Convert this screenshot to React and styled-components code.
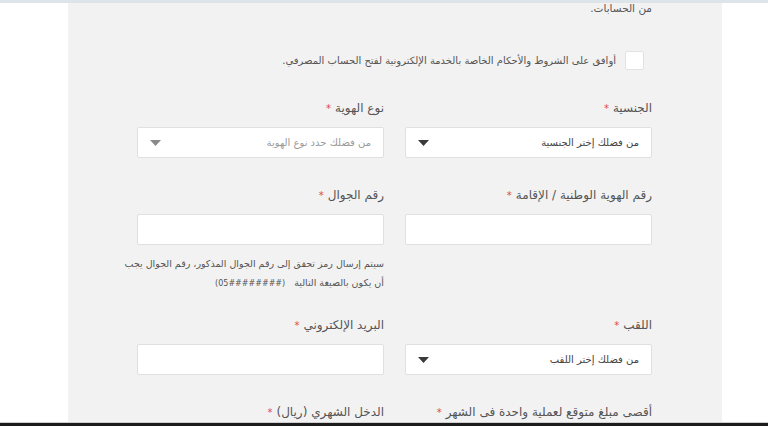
import styled, { createGlobalStyle } from 'styled-components'

const GlobalStyle = createGlobalStyle`
  html, body {
    margin: 0;
    padding: 0;
    background: #ffffff;
  }
  body {
    font-family: "DejaVu Sans", "Noto Sans", sans-serif;
    color: #555;
  }
`

const Screen = styled.div`
  width: 768px;
  height: 426px;
  display: flex;
  flex-direction: column;
  overflow: hidden;
  background: #fff;
`

const TopLine = styled.div`
  height: 3px;
  flex-shrink: 0;
  background: #dde5ea;
`

const Stage = styled.div`
  flex: 1;
  min-height: 0;
  display: flex;
  padding: 0 46px 0 68px;
  overflow: hidden;
`

const Panel = styled.form`
  flex: 1;
  background: #f2f2f2;
  padding: 0 70px 0 69px;
  display: flex;
  flex-direction: column;
  direction: rtl;
  overflow: hidden;
`

const Intro = styled.p`
  margin: -4px 0 0;
  font-size: 10.5px;
  line-height: 18px;
  color: #555;
`

const AgreeRow = styled.label`
  display: flex;
  align-items: center;
  gap: 9px;
  margin-top: 34px;
  margin-right: 8px;
  font-size: 10px;
  color: #555;
`

const Check = styled.span`
  width: 17px;
  height: 17px;
  flex-shrink: 0;
  background: #fff;
  border: 1px solid #e2e2e2;
  border-radius: 2px;
`

const Grid = styled.div`
  display: grid;
  grid-template-columns: 247px 247px;
  column-gap: 21px;
  row-gap: 27px;
  margin-top: 28px;
`

const Field = styled.div`
  display: flex;
  flex-direction: column;
`

const Label = styled.div`
  font-size: 12px;
  line-height: 20px;
  color: #555;
  margin-bottom: 8px;
  white-space: nowrap;

  b {
    color: #e0474c;
    font-weight: normal;
    font-size: 10px;
    margin-right: 4px;
  }
`

const Input = styled.div`
  height: 29px;
  background: #fff;
  border: 1px solid #e0e0e0;
  border-radius: 2px;
`

const Select = styled.div`
  height: 29px;
  background: #fff;
  border: 1px solid #e0e0e0;
  border-radius: 2px;
  display: flex;
  align-items: center;
  justify-content: space-between;
  padding: 0 12px 0 12px;
  font-size: 10px;
  color: ${p => (p.$disabled ? '#9a9a9a' : '#444')};
`

const Help = styled.div`
  margin-top: 9px;
  margin-bottom: -5px;
  font-size: 9.5px;
  line-height: 19px;
  color: #555;
  white-space: nowrap;
`

const Format = styled.span`
  display: inline-block;
  direction: ltr;
  unicode-bidi: isolate;
  font-size: 8px;
  margin-right: 6px;
`

const Caret = ({ muted }) => (
  <svg width="11" height="6" viewBox="0 0 11 6">
    <path d="M0 0 L11 0 L5.5 6 Z" fill={muted ? '#8a8a8a' : '#3a3a3a'} />
  </svg>
)

const Req = ({ children }) => (
  <Label>
    {children}
    <b>*</b>
  </Label>
)

export default function App() {
  return (
    <Screen>
      <GlobalStyle />
      <TopLine />
      <Stage>
        <Panel>
          <Intro>من الحسابات.</Intro>
          <AgreeRow>
            <Check />
            <span>أوافق على الشروط والأحكام الخاصة بالخدمة الإلكترونية لفتح الحساب المصرفي.</span>
          </AgreeRow>
          <Grid>
            <Field>
              <Req>الجنسية</Req>
              <Select>
                <span>من فضلك إختر الجنسية</span>
                <Caret />
              </Select>
            </Field>
            <Field>
              <Req>نوع الهوية</Req>
              <Select $disabled>
                <span>من فضلك حدد نوع الهوية</span>
                <Caret muted />
              </Select>
            </Field>

            <Field>
              <Req>رقم الهوية الوطنية / الإقامة</Req>
              <Input />
            </Field>
            <Field>
              <Req>رقم الجوال</Req>
              <Input />
              <Help>
                سيتم إرسال رمز تحقق إلى رقم الجوال المذكور، رقم الجوال يجب
                <br />
                أن يكون بالصيغة التالية <Format>(05########)</Format>
              </Help>
            </Field>

            <Field>
              <Req>اللقب</Req>
              <Select>
                <span>من فضلك إختر اللقب</span>
                <Caret />
              </Select>
            </Field>
            <Field>
              <Req>البريد الإلكتروني</Req>
              <Input />
            </Field>

            <Field>
              <Req>أقصى مبلغ متوقع لعملية واحدة فى الشهر</Req>
            </Field>
            <Field>
              <Req>الدخل الشهري (ريال)</Req>
            </Field>
          </Grid>
        </Panel>
      </Stage>
      <BottomBar />
    </Screen>
  )
}

const BottomBar = styled.div`
  height: 3px;
  flex-shrink: 0;
  background: #1c1c1c;
  border-top: 1px solid #cfcfcf;
`
